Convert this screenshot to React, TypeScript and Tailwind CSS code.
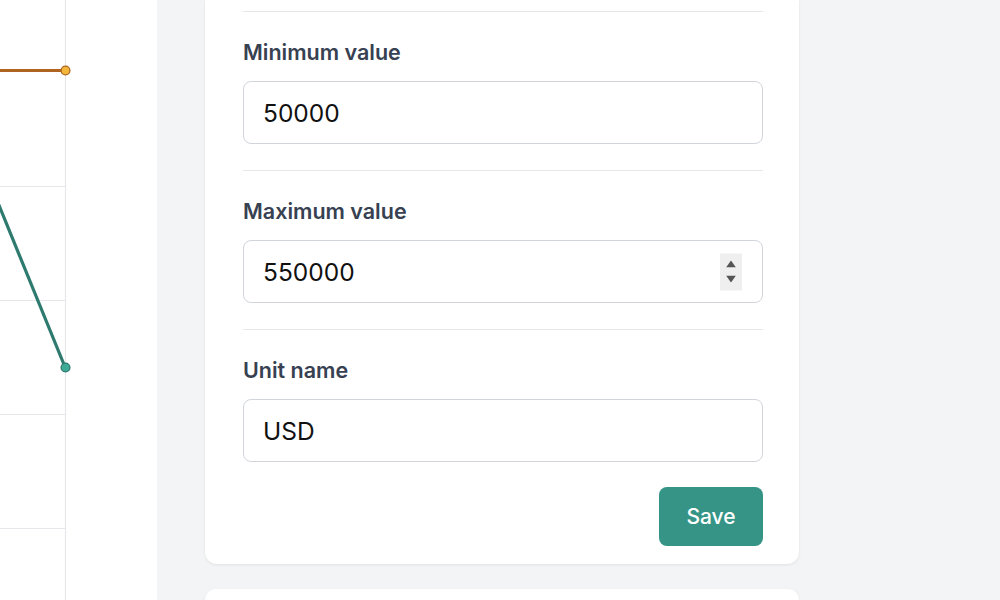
import * as React from "react";

const fields = [
  { label: "Minimum value", value: "50000", spinner: false },
  { label: "Maximum value", value: "550000", spinner: true },
  { label: "Unit name", value: "USD", spinner: false },
];

function Chart() {
  return (
    <svg width="157" height="600" viewBox="0 0 157 600" className="block">
      <line x1="65.5" y1="0" x2="65.5" y2="600" stroke="#e5e7eb" strokeWidth="1.2" />
      {[186, 300, 414, 528].map((y) => (
        <line key={y} x1="0" y1={y + 0.5} x2="65" y2={y + 0.5} stroke="#e5e7eb" strokeWidth="1.2" />
      ))}
      <line x1="0" y1="70.5" x2="65" y2="70.5" stroke="#b0641f" strokeWidth="3.2" />
      <circle cx="65.5" cy="70.5" r="4.4" fill="#f2b73a" stroke="#b0641f" strokeWidth="1.3" />
      <line x1="-4" y1="198" x2="65" y2="367" stroke="#2e7a6e" strokeWidth="3.2" />
      <circle cx="65.5" cy="367.5" r="4.4" fill="#3daa96" stroke="#2e7a6e" strokeWidth="1.3" />
    </svg>
  );
}

function Spinner() {
  return (
    <div className="absolute right-[21px] top-1/2 -translate-y-1/2 w-[22px] h-[37px] bg-[#efefef] flex flex-col items-center justify-center gap-[8px]">
      <svg width="10" height="7" viewBox="0 0 10 7">
        <path d="M5 0 L10 7 L0 7 Z" fill="#555" />
      </svg>
      <svg width="10" height="7" viewBox="0 0 10 7">
        <path d="M0 0 L10 0 L5 7 Z" fill="#555" />
      </svg>
    </div>
  );
}

export default function App() {
  return (
    <div
      className="w-[1000px] h-[600px] overflow-hidden flex bg-[#f3f4f6]"
      style={{ fontFamily: "Inter, 'Noto Sans', sans-serif" }}
    >
      <div className="w-[157px] shrink-0 bg-white">
        <Chart />
      </div>

      <div className="ml-[48px] w-[594px] flex flex-col gap-[25px]">
        <div className="bg-white rounded-b-xl shadow-[0_1px_3px_rgba(0,0,0,0.08)] pl-[38px] pr-[36px] pt-[11px] pb-[18px]">
          {fields.map((f) => (
            <div key={f.label} className="border-t border-[#e5e7eb] pt-[27px] pb-[26px]">
              <label className="block text-[21.5px] leading-[26px] font-semibold text-[#374151]">{f.label}</label>
              <div className="relative mt-[16px]">
                <input
                  type="text"
                  readOnly
                  value={f.value}
                  className="w-full h-[63px] rounded-lg border border-[#d1d5db] bg-white pl-[19px] text-[24.5px] text-[#111111] outline-none"
                />
                {f.spinner && <Spinner />}
              </div>
            </div>
          ))}
          <div className="flex justify-end -mt-[1px]">
            <button className="w-[104px] h-[59px] rounded-lg bg-[#359486] text-white text-[21px] font-medium">
              Save
            </button>
          </div>
        </div>
        <div className="bg-white rounded-t-xl h-[40px] shadow-[0_1px_3px_rgba(0,0,0,0.08)]" />
      </div>
    </div>
  );
}
